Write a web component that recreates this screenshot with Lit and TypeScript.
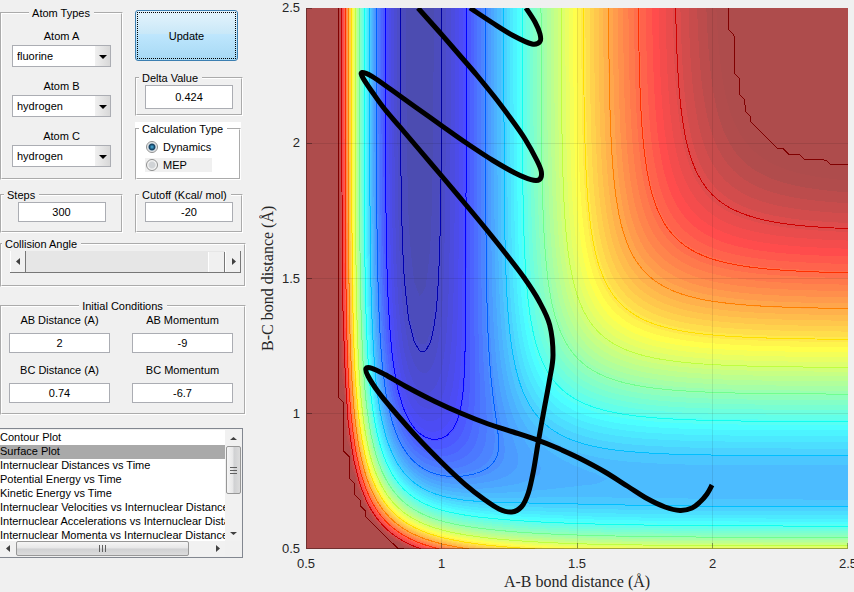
import { LitElement, html, svg, css } from "lit";
import { customElement, property, query, state } from "lit/decorators.js";

/* ---------- Potential energy surface (collinear LEPS, kcal/mol and angstrom) ---------- */

const R_MIN = 0.5;
const R_MAX = 2.5;
const CELLS = 100;
const WIDTH = 542;
const HEIGHT = 541;
const SATO = 0.187;
const CAP = -22.3;
const LINE_STEP = 10.43;
const LINE_COUNT = 12;

const HF = { d: 141.2, beta: 2.2189, r0: 0.917 };
const HH = { d: 109.45, beta: 1.942, r0: 0.7419 };

type Bond = { d: number; beta: number; r0: number };

function integrals(bond: Bond, r: number): [number, number] {
  const e = Math.exp(-bond.beta * (r - bond.r0));
  const f = bond.d / (4 * (1 + SATO));
  return [
    f * ((3 + SATO) * e * e - (2 + 6 * SATO) * e),
    f * ((1 + 3 * SATO) * e * e - (6 + 2 * SATO) * e),
  ];
}

function energy(ab: number, bc: number): number {
  const [q1, j1] = integrals(HF, ab);
  const [q2, j2] = integrals(HH, bc);
  const [q3, j3] = integrals(HF, ab + bc);
  const spread = (j1 - j2) ** 2 + (j2 - j3) ** 2 + (j3 - j1) ** 2;
  return Math.min(CAP, q1 + q2 + q3 - Math.sqrt(spread / 2));
}

const grid: number[][] = [];
let lowest = 0;
for (let j = 0; j <= CELLS; j++) {
  const row: number[] = [];
  for (let i = 0; i <= CELLS; i++) {
    const step = (R_MAX - R_MIN) / CELLS;
    const v = energy(R_MIN + i * step, R_MIN + j * step);
    lowest = Math.min(lowest, v);
    row.push(v);
  }
  grid.push(row);
}

function sample(gx: number, gy: number): number {
  const i = Math.min(CELLS - 1, Math.floor(gx));
  const j = Math.min(CELLS - 1, Math.floor(gy));
  const u = gx - i;
  const v = gy - j;
  return (
    (grid[j][i] * (1 - u) + grid[j][i + 1] * u) * (1 - v) +
    (grid[j + 1][i] * (1 - u) + grid[j + 1][i + 1] * u) * v
  );
}

function jet(value: number): [number, number, number] {
  const t = (value - lowest) / (CAP - lowest);
  const u = Math.max(0, Math.min(63, Math.floor(t * 64))) + 1;
  const ramp = (x: number) => Math.max(0, Math.min(1, x)) * 255;
  return [
    ramp(u <= 40 ? (u - 24) / 16 : (72 - u) / 16),
    ramp(u <= 24 ? (u - 8) / 16 : (56 - u) / 16),
    ramp(u <= 24 ? (u + 8) / 16 : (40 - u) / 16),
  ];
}

/* Marching squares: one path of short segments for each energy level. */
function contourPath(level: number): string {
  const sx = WIDTH / CELLS;
  const sy = HEIGHT / CELLS;
  let d = "";
  for (let j = 0; j < CELLS; j++) {
    for (let i = 0; i < CELLS; i++) {
      const corners = [
        [i, j, grid[j][i]],
        [i + 1, j, grid[j][i + 1]],
        [i + 1, j + 1, grid[j + 1][i + 1]],
        [i, j + 1, grid[j + 1][i]],
      ];
      const cuts: string[] = [];
      for (let k = 0; k < 4; k++) {
        const [x1, y1, a] = corners[k];
        const [x2, y2, b] = corners[(k + 1) % 4];
        if (a < level !== b < level) {
          const t = (level - a) / (b - a);
          const x = (x1 + (x2 - x1) * t) * sx;
          const y = HEIGHT - (y1 + (y2 - y1) * t) * sy;
          cuts.push(`${x.toFixed(2)} ${y.toFixed(2)}`);
        }
      }
      for (let k = 0; k + 1 < cuts.length; k += 2) d += `M${cuts[k]}L${cuts[k + 1]}`;
    }
  }
  return d;
}

const contours = Array.from({ length: LINE_COUNT }, (_, k) => {
  const level = k === 0 ? CAP - 0.001 : CAP - k * LINE_STEP;
  return { d: contourPath(level), color: `rgb(${jet(level).map(Math.round).join(",")})` };
});

/* ---------- Trajectory ---------- */

const MAIN_TRACK: [number, number][] = [
  [406, 477], [401, 486], [394, 494], [386, 500], [374, 502.5], [359, 499], [341, 490.5],
  [322, 478.5], [299, 464], [274, 450.5], [249, 439], [232.3, 432.3], [207.3, 424], [182.3, 416],
  [155.7, 405.5], [129, 393.5], [99, 378], [79, 366.5], [66, 360.3], [60, 360.5], [62, 368],
  [72.3, 384], [87, 402], [112, 430.3], [135.7, 454.5], [159, 476.3], [178, 491.3], [193, 501],
  [205.7, 504], [215.7, 498.5], [222.3, 485], [227.3, 463.7], [232.3, 433.7], [238, 402],
  [243.5, 372], [247, 347], [243.7, 317], [233, 293], [218.3, 270], [200, 246], [180, 221],
  [158, 194.5], [135.7, 168], [112.3, 140.5], [94, 119], [79, 101.5], [67.3, 85.5], [57, 70],
  [56, 64.5], [66, 68.3], [85.7, 82], [109, 98.7], [135.7, 117.7], [160.7, 135.3], [187, 152.5],
  [209, 165], [225, 171.7], [233.5, 171.5], [235.3, 163.5], [230.7, 152], [219, 131], [204, 109.5],
  [188, 88.3], [170.7, 67], [153, 46.5], [133, 23.5], [112, 0],
];
const EXIT_TRACK: [number, number][] = [
  [220, 0], [229, 14], [234, 26], [234, 33.5], [226, 36], [207, 27.5], [186, 14.5], [164, 0],
];

function smoothPath(points: [number, number][]): string {
  let d = `M${points[0].join(" ")}`;
  for (let i = 0; i + 1 < points.length; i++) {
    const p0 = points[Math.max(0, i - 1)];
    const p1 = points[i];
    const p2 = points[i + 1];
    const p3 = points[Math.min(points.length - 1, i + 2)];
    const c1 = [p1[0] + (p2[0] - p0[0]) / 6, p1[1] + (p2[1] - p0[1]) / 6];
    const c2 = [p2[0] - (p3[0] - p1[0]) / 6, p2[1] - (p3[1] - p1[1]) / 6];
    d += `C${c1.map((n) => n.toFixed(1)).join(" ")} ${c2.map((n) => n.toFixed(1)).join(" ")} ${p2.join(" ")}`;
  }
  return d;
}

const TICKS = ["0.5", "1", "1.5", "2", "2.5"];

@customElement("energy-plot")
class EnergyPlot extends LitElement {
  @query("canvas") private canvas!: HTMLCanvasElement;

  static styles = css`
    :host {
      display: grid;
      grid-template-columns: 20px 22px minmax(0, 1fr);
      font: 13px/16px "Liberation Sans", Arial, sans-serif;
      color: #262626;
    }
    .title {
      font: 16px/20px "Liberation Serif", "Times New Roman", serif;
      text-align: center;
    }
    .vertical {
      writing-mode: vertical-rl;
      transform: rotate(180deg);
    }
    .y-ticks {
      display: flex;
      flex-direction: column-reverse;
      justify-content: space-between;
      text-align: right;
      margin: -8px 0;
    }
    .area {
      position: relative;
      margin-left: 6px;
      aspect-ratio: 542 / 541;
    }
    canvas,
    svg {
      position: absolute;
      inset: 0;
      width: 100%;
      height: 100%;
      display: block;
    }
    .x-axis {
      grid-column: 3;
      margin-left: 6px;
    }
    .x-ticks {
      display: flex;
      justify-content: space-between;
      margin: 7px -12px 0;
    }
    .x-ticks span {
      width: 24px;
      text-align: center;
    }
  `;

  firstUpdated() {
    const ctx = this.canvas.getContext("2d")!;
    const image = ctx.createImageData(WIDTH, HEIGHT);
    for (let y = 0; y < HEIGHT; y++) {
      for (let x = 0; x < WIDTH; x++) {
        const v = sample(((x + 0.5) / WIDTH) * CELLS, (1 - (y + 0.5) / HEIGHT) * CELLS);
        const rgb = jet(v);
        const at = (y * WIDTH + x) * 4;
        for (let c = 0; c < 3; c++) image.data[at + c] = Math.max(rgb[c], c === 0 && rgb[1] + rgb[2] === 0 ? 139 : 0) * 0.7 + 255 * 0.3;
        image.data[at + 3] = 255;
      }
    }
    ctx.putImageData(image, 0, 0);
  }

  render() {
    const xs = [0.5, 135.5, 271.5, 406.5, 541.5];
    const ys = [540.5, 405.5, 270.5, 135.5, 0.5];
    return html`
      <div class="title vertical">B-C bond distance (Å)</div>
      <div class="y-ticks">${TICKS.map((t) => html`<span>${t}</span>`)}</div>
      <div class="area">
        <canvas width=${WIDTH} height=${HEIGHT}></canvas>
        <svg viewBox="0 0 542 541" role="img" aria-label="Contour plot with trajectory">
          <g fill="none" shape-rendering="crispEdges">
            ${contours.map((c) => svg`<path d=${c.d} stroke=${c.color} />`)}
            <g stroke="#000" stroke-opacity="0.09">
              ${xs.slice(1, 4).map((x) => svg`<path d=${`M${x} 0V541`} />`)}
              ${ys.slice(1, 4).map((y) => svg`<path d=${`M0 ${y}H542`} />`)}
            </g>
            <path d="M0.5 0V540.5H542" stroke="#000" stroke-opacity="0.35" />
            <g stroke="#000" stroke-opacity="0.35">
              ${xs.slice(1).map((x) => svg`<path d=${`M${x} 535V540`} />`)}
              ${ys.slice(1).map((y) => svg`<path d=${`M1 ${y}H6`} />`)}
            </g>
          </g>
          <g fill="none" stroke="#000" stroke-width="5" stroke-linejoin="round">
            <path d=${smoothPath(MAIN_TRACK)} />
            <path d=${smoothPath(EXIT_TRACK)} />
          </g>
        </svg>
      </div>
      <div class="x-axis">
        <div class="x-ticks">${TICKS.map((t) => html`<span>${t}</span>`)}</div>
        <div class="title">A-B bond distance (Å)</div>
      </div>
    `;
  }
}

/* ---------- Control panel ---------- */

const ATOMS = ["fluorine", "hydrogen", "chlorine", "deuterium"];
const PLOTS = [
  "Contour Plot",
  "Surface Plot",
  "Internuclear Distances vs Time",
  "Potential Energy vs Time",
  "Kinetic Energy vs Time",
  "Internuclear Velocities vs Internuclear Distances",
  "Internuclear Accelerations vs Internuclear Distances",
  "Internuclear Momenta vs Internuclear Distances",
];

@customElement("app-root")
class AppRoot extends LitElement {
  @property({ type: String }) method = "Dynamics";
  @state() private plot = "Surface Plot";

  static styles = css`
    :host {
      display: block;
      min-height: 100vh;
      box-sizing: border-box;
      background: #f0f0f0;
      border-bottom: 1px solid #b9cce4;
      overflow: hidden;
      font: 11px/14px "Liberation Sans", Arial, sans-serif;
      color: #000;
    }
    .page {
      display: flex;
      align-items: flex-start;
    }
    .panel {
      flex: 0 0 246px;
      display: flex;
      flex-direction: column;
      padding-top: 6px;
    }
    energy-plot {
      flex: 1;
      min-width: 0;
      padding: 8px 6px 0 12px;
    }
    .row {
      display: grid;
      grid-template-columns: 123px 108px;
      gap: 12px;
    }
    .stack {
      display: flex;
      flex-direction: column;
      padding-top: 4px;
    }
    fieldset {
      margin: 0;
      padding: 0;
      min-width: 0;
      border: 2px groove #fff;
      box-sizing: border-box;
    }
    legend {
      padding: 0 4px 0 3px;
      margin-left: 2px;
      white-space: nowrap;
    }
    .centered > legend {
      margin: 0 auto;
    }
    label {
      display: block;
    }
    input,
    select,
    button {
      font: inherit;
      color: inherit;
      margin: 0;
      box-sizing: border-box;
      border-radius: 0;
    }
    .text {
      display: block;
      border: 1px solid #abadb3;
      background: #fff;
      text-align: center;
      padding: 0;
      height: 20px;
      width: 100%;
    }
    .text.tall {
      height: 24px;
    }
    .single {
      height: 45px;
    }
    .single .text {
      width: 88px;
      margin: 0 auto;
    }
    .atoms {
      padding: 9px 0 10px;
      display: flex;
      flex-direction: column;
      gap: 12px;
    }
    .atom {
      display: flex;
      flex-direction: column;
      align-items: center;
      gap: 2px;
    }
    .combo {
      position: relative;
      width: 99px;
    }
    .combo select {
      appearance: none;
      display: block;
      width: 100%;
      height: 22px;
      padding: 0 20px 0 4px;
      border: 1px solid #abadb3;
      background: linear-gradient(90deg, #f0f0f0, #d8d8d8) right / 15px 100% no-repeat #fff;
    }
    .combo::after {
      content: "";
      position: absolute;
      right: 4px;
      top: 10px;
      border: 4px solid transparent;
      border-top-color: #000;
      border-bottom: 0;
      pointer-events: none;
    }
    .update {
      width: 103px;
      height: 51px;
      padding: 1px;
      border: 1px solid #3c7fb1;
      border-radius: 3px;
      background: linear-gradient(#e5f4fc, #c9e8f8 46%, #bee6fd 48%, #a6d9f4);
      margin-bottom: 10px;
    }
    .update span {
      display: flex;
      align-items: center;
      justify-content: center;
      height: 100%;
      box-sizing: border-box;
      border: 1px dotted #000;
    }
    .calc {
      background: #fff;
      margin-top: 6px;
      height: 58px;
      width: 106px;
    }
    .calc fieldset {
      height: 100%;
    }
    .choice {
      display: flex;
      align-items: center;
      gap: 5px;
      width: 66px;
      height: 14px;
      margin: 4px 0 0 8px;
      padding-left: 1px;
    }
    .choice + .choice {
      background: #f0f0f0;
    }
    .choice input {
      appearance: none;
      width: 12px;
      height: 12px;
      border: 1px solid #8e8f8f;
      border-radius: 50%;
      background: radial-gradient(#d0d3d6 40%, #f4f4f4 60%);
    }
    .choice input:checked {
      background: radial-gradient(circle at 50% 50%, #4fb6e3 0, #0e3a5c 40%, #c9d4dc 55%, #f4f4f4 70%);
    }
    .settings {
      margin-top: 8px;
    }
    .angle {
      margin-top: 4px;
      height: 50px;
    }
    .angle legend {
      margin-left: 0;
    }
    .slider {
      display: flex;
      height: 21px;
      margin: 0 3px 0 8px;
      background: #e6e6e6;
      border-bottom: 1px solid #777;
    }
    .slider button {
      width: 16px;
      padding: 0;
      border: 0;
      border-left: 1px solid #fff;
      border-right: 1px solid #777;
      background: #f0f0f0;
      display: grid;
      place-items: center;
    }
    .slider input {
      flex: 1;
      min-width: 0;
      height: 100%;
      appearance: none;
      background: #e6e6e6;
    }
    .slider input::-webkit-slider-thumb {
      appearance: none;
      width: 17px;
      height: 20px;
      background: #f0f0f0;
      border-left: 1px solid #fff;
      border-right: 1px solid #777;
    }
    .initial {
      margin-top: 12px;
      height: 116px;
    }
    .fields {
      display: grid;
      grid-template-columns: 101px 101px;
      gap: 10px 22px;
      padding-left: 7px;
      text-align: center;
    }
    .fields label {
      margin-bottom: 6px;
    }
    .list {
      display: grid;
      grid-template-columns: minmax(0, 1fr) 16px;
      width: 243px;
      height: 130px;
      margin-top: 13px;
      box-sizing: border-box;
      border: 1px solid #828790;
      border-left: 0;
      padding: 1px 1px 1px 0;
      grid-template-rows: 111px 15px;
      background: #f0f0f0;
    }
    .list select {
      border: 0;
      padding: 1px 0 0;
      outline: 0;
      width: 100%;
      height: 111px;
      background: #fff;
      overflow: hidden;
      scrollbar-width: none;
    }
    .list option {
      padding: 0;
      min-height: 14px;
      line-height: 14px;
      overflow: hidden;
    }
    .list option:checked {
      background: linear-gradient(#a9a9a9, #a9a9a9);
      color: #000;
    }
    .bar {
      display: flex;
      align-items: center;
      background: #f1f1f1;
    }
    .bar.down {
      flex-direction: column;
    }
    .bar button {
      padding: 0;
      border: 0;
      background: none;
      width: 16px;
      height: 16px;
      display: grid;
      place-items: center;
    }
    .bar .grip {
      border: 1px solid #979797;
      border-radius: 2px;
      height: 15px;
      width: 173px;
      background: linear-gradient(#f5f5f5, #e6e6e7 48%, #cfd0d2 52%, #dcdcdc);
    }
    .bar.down .grip {
      height: 48px;
      width: 15px;
      background: linear-gradient(90deg, #f5f5f5, #e6e6e7 48%, #cfd0d2 52%, #dcdcdc);
    }
    .bar .end {
      margin-left: auto;
    }
    .bar.down .end {
      margin: auto 0 0;
    }
    .arrow {
      width: 7px;
      height: 7px;
      display: block;
      fill: #404040;
    }
    .ridges {
      width: 9px;
      height: 9px;
      display: block;
      stroke: #606060;
      shape-rendering: crispEdges;
    }
  `;

  private arrow(d: string) {
    return html`<svg class="arrow" viewBox="0 0 7 7"><path d=${d} /></svg>`;
  }

  private atom(id: string, name: string, value: string) {
    return html`<div class="atom">
      <label for=${id}>${name}</label>
      <div class="combo">
        <select id=${id}>
          ${ATOMS.map((a) => html`<option ?selected=${a === value}>${a}</option>`)}
        </select>
      </div>
    </div>`;
  }

  private field(id: string, name: string, value: string) {
    return html`<div>
      <label for=${id}>${name}</label>
      <input class="text" id=${id} .value=${value} />
    </div>`;
  }

  private choice(name: string) {
    return html`<label class="choice">
      <input
        type="radio"
        name="method"
        .checked=${this.method === name}
        @change=${() => (this.method = name)}
      />${name}
    </label>`;
  }

  render() {
    const left = "M5 0V7L1 3.5Z";
    const right = "M2 0V7L6 3.5Z";
    return html`
      <main class="page">
        <form class="panel" @submit=${(e: Event) => e.preventDefault()}>
          <div class="row">
            <fieldset class="centered">
              <legend>Atom Types</legend>
              <div class="atoms">
                ${this.atom("a", "Atom A", "fluorine")} ${this.atom("b", "Atom B", "hydrogen")}
                ${this.atom("c", "Atom C", "hydrogen")}
              </div>
            </fieldset>
            <div class="stack">
              <button class="update"><span>Update</span></button>
              <fieldset class="single">
                <legend>Delta Value</legend>
                <input class="text tall" aria-label="Delta Value" value="0.424" />
              </fieldset>
              <div class="calc">
                <fieldset>
                  <legend>Calculation Type</legend>
                  ${this.choice("Dynamics")} ${this.choice("MEP")}
                </fieldset>
              </div>
            </div>
          </div>

          <div class="row settings">
            <fieldset class="single">
              <legend>Steps</legend>
              <input class="text" aria-label="Steps" value="300" />
            </fieldset>
            <fieldset class="single">
              <legend>Cutoff (Kcal/ mol)</legend>
              <input class="text" aria-label="Cutoff" value="-20" />
            </fieldset>
          </div>

          <fieldset class="angle">
            <legend>Collision Angle</legend>
            <div class="slider">
              <button type="button" aria-label="Decrease">${this.arrow(left)}</button>
              <input type="range" min="0" max="180" value="180" aria-label="Collision Angle" />
              <button type="button" aria-label="Increase">${this.arrow(right)}</button>
            </div>
          </fieldset>

          <fieldset class="initial centered">
            <legend>Initial Conditions</legend>
            <div class="fields">
              ${this.field("abd", "AB Distance (A)", "2")} ${this.field("abm", "AB Momentum", "-9")}
              ${this.field("bcd", "BC Distance (A)", "0.74")} ${this.field("bcm", "BC Momentum", "-6.7")}
            </div>
          </fieldset>

          <div class="list">
            <select
              size="8"
              aria-label="Plot type"
              @change=${(e: Event) => (this.plot = (e.target as HTMLSelectElement).value)}
            >
              ${PLOTS.map((p) => html`<option ?selected=${p === this.plot}>${p}</option>`)}
            </select>
            <div class="bar down">
              <button type="button" aria-label="Scroll up">${this.arrow("M0 5H7L3.5 2Z")}</button>
              <button type="button" class="grip" aria-label="Vertical position">
                <svg class="ridges" viewBox="0 0 9 9"><path d="M1 1.5H8M1 4.5H8M1 7.5H8" /></svg>
              </button>
              <button type="button" class="end" aria-label="Scroll down">${this.arrow("M0 2H7L3.5 5Z")}</button>
            </div>
            <div class="bar">
              <button type="button" aria-label="Scroll left">${this.arrow(left)}</button>
              <button type="button" class="grip" aria-label="Horizontal position">
                <svg class="ridges" viewBox="0 0 9 9"><path d="M1.5 1V8M4.5 1V8M7.5 1V8" /></svg>
              </button>
              <button type="button" class="end" aria-label="Scroll right">${this.arrow(right)}</button>
            </div>
          </div>
        </form>
        <energy-plot></energy-plot>
      </main>
    `;
  }
}
